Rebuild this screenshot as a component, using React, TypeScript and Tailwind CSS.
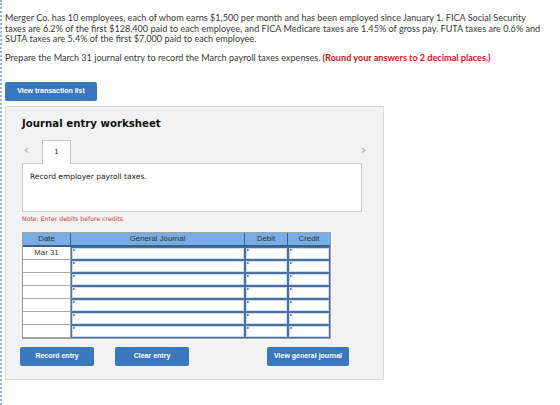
import React from 'react';

const rows = ['Mar 31', '', '', '', '', '', ''];

function Marker() {
  return (
    <span className="absolute left-[1px] top-[1px] h-0 w-0 border-l-[3px] border-t-[1.5px] border-b-[1.5px] border-l-[#2f6fc4] border-t-transparent border-b-transparent" />
  );
}

function InputCell() {
  return (
    <div className="relative h-[13px] border border-[#4f6f9c] bg-white shadow-[inset_0_0_0_1px_#c9dbf2]">
      <Marker />
    </div>
  );
}

function BlueButton({ label, className }: { label: string; className?: string }) {
  return (
    <button
      className={`h-[19px] rounded-[2px] bg-[#3a78bd] text-[7px] font-bold text-white font-['Liberation_Sans',sans-serif] ${className ?? ''}`}
    >
      {label}
    </button>
  );
}

export default function App() {
  return (
    <div className="min-h-[405px] w-[560px] border-l-2 border-dotted border-[#8fb6e3] bg-white pl-[3px] pt-[13px] text-[#3a3a3a] font-['Lato',sans-serif]">
      <p className="whitespace-nowrap text-[9.1px] leading-[10.5px]">
        Merger Co. has 10 employees, each of whom earns $1,500 per month and has been employed since January 1. FICA Social Security
        <br />
        taxes are 6.2% of the first $128,400 paid to each employee, and FICA Medicare taxes are 1.45% of gross pay. FUTA taxes are 0.6% and
        <br />
        SUTA taxes are 5.4% of the first $7,000 paid to each employee.
      </p>
      <p className="mt-[8px] whitespace-nowrap text-[9.1px] leading-[10.5px]">
        Prepare the March 31 journal entry to record the March payroll taxes expenses.{' '}
        <span className="font-bold text-[#c5161d]">(Round your answers to 2 decimal places.)</span>
      </p>

      <BlueButton label="View transaction list" className="mt-[19px] block w-[92px]" />

      <div className="mt-[5px] w-[379px] border border-[#dcdcdc] bg-[#f2f2f2] pb-[13px] pl-[16px] pt-[10px]">
        <h2 className="text-[10.2px] font-bold leading-[14px] text-[#111] font-['DejaVu_Sans',sans-serif]">
          Journal entry worksheet
        </h2>

        <div className="mt-[8px] flex h-[24px] w-[340px] items-end">
          <span className="mb-[7px] ml-[2px] w-[18px] text-[13px] leading-none text-[#aaa] font-['DejaVu_Sans',sans-serif]">‹</span>
          <div className="-mb-px flex h-[24px] w-[29px] items-center justify-center border border-b-0 border-[#c8c8c8] bg-white text-[7px] text-[#222] font-['DejaVu_Sans',sans-serif]">
            1
          </div>
          <span className="mb-[7px] ml-auto mr-[-4px] text-[13px] leading-none text-[#aaa] font-['DejaVu_Sans',sans-serif]">›</span>
        </div>

        <div className="h-[49px] w-[340px] border border-[#cfcfcf] bg-white px-[7px] pt-[7px] text-[7.5px] text-[#222] font-['DejaVu_Sans',sans-serif]">
          Record employer payroll taxes.
        </div>

        <p className="mt-[3px] text-[6.2px] leading-[8px] text-[#d04040] font-['DejaVu_Sans',sans-serif]">Note: Enter debits before credits.</p>

        <div className="mt-[9px] w-[309px] border border-[#a0a0a0] text-[7.8px] text-[#333] font-['Liberation_Sans',sans-serif]">
          <div className="grid h-[14px] grid-cols-[48px_174px_43px_1fr] border-b-2 border-[#3d5f8c] bg-[#78ace4] leading-[12px]">
            <div className="border-r border-[#3d5f8c] text-center">Date</div>
            <div className="border-r border-[#3d5f8c] text-center">General Journal</div>
            <div className="border-r border-[#3d5f8c] text-center">Debit</div>
            <div className="text-center">Credit</div>
          </div>
          {rows.map((d, i) => (
            <div key={i} className="grid grid-cols-[48px_174px_43px_1fr]">
              <div className="h-[13px] border-b border-r border-[#a8a8a8] bg-white text-center leading-[12px]">{d}</div>
              <InputCell />
              <InputCell />
              <InputCell />
            </div>
          ))}
        </div>

        <div className="mt-[8px] flex w-[327px]">
          <BlueButton label="Record entry" className="ml-[-2px] w-[74px]" />
          <BlueButton label="Clear entry" className="ml-[21px] w-[74px]" />
          <BlueButton label="View general journal" className="ml-auto w-[82px]" />
        </div>
      </div>
    </div>
  );
}
